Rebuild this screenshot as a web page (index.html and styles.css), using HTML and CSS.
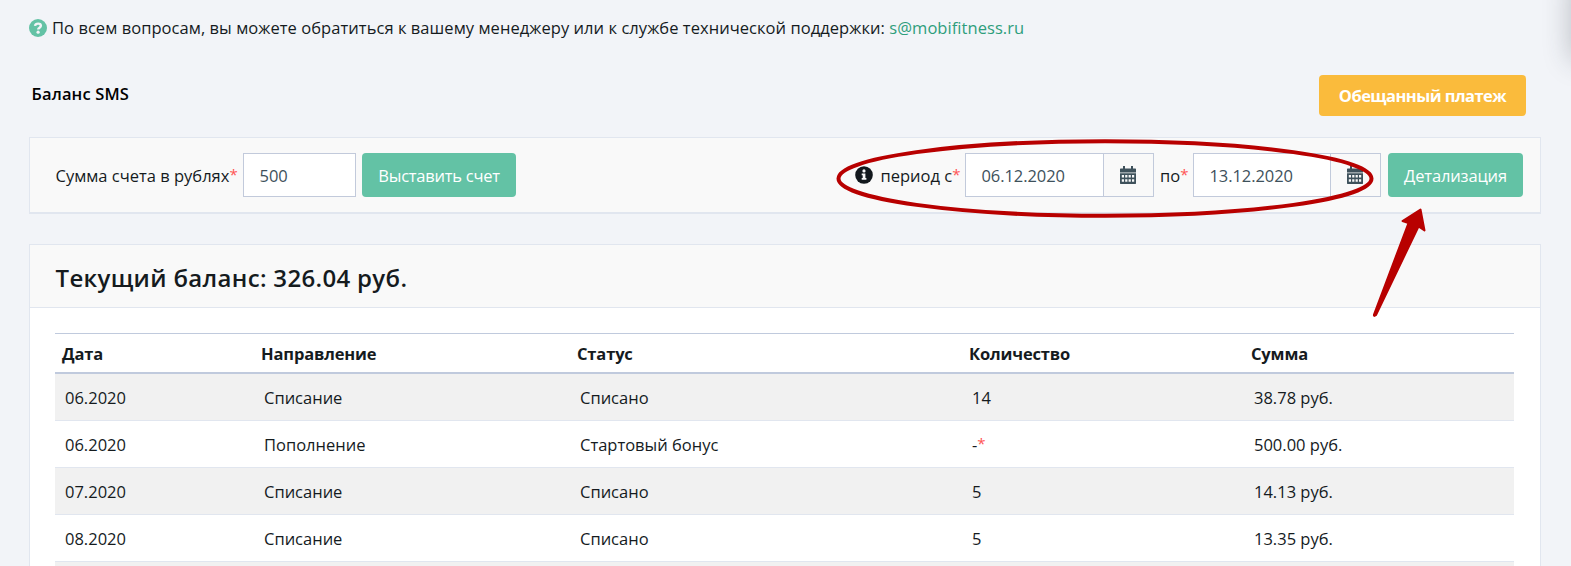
FILE: index.html
```html
<!DOCTYPE html>
<html lang="ru">
<head>
<meta charset="utf-8">
<title>Баланс SMS</title>
<link rel="stylesheet" href="styles.css">
</head>
<body>
<svg class="sprite" aria-hidden="true">
  <symbol id="calendar" viewBox="0 0 16 18">
    <path fill="currentColor" fill-rule="evenodd" d="M3 0h2v2.500h6V0h2v2.500h2.500l.5.5v3.500H0V3l.5-.5H3zM0 7.200h16V17.500l-.5.500H.5L0 17.500zM1.800 9v2.500h2.200V9zm3.400 0v2.500h2.200V9zm3.400 0v2.500h2.200V9zm3.400 0v2.500h2.200V9zM1.800 13.200v2.500h2.200v-2.500zm3.400 0v2.500h2.200v-2.500zm3.400 0v2.500h2.200v-2.500zm3.400 0v2.500h2.200v-2.500z"/>
  </symbol>
</svg>
<main class="page">
  <p class="help">
    <svg class="help-icon" viewBox="0 0 18 18"><circle cx="9" cy="9" r="9" fill="#63c2a5"/><path d="M6 6.900C6.300 5.300 7.500 4.600 9.100 4.600c1.700 0 2.800.9 2.800 2.200 0 1.900-2.700 1.800-2.700 3.700" fill="none" stroke="#f2f4f8" stroke-width="2.400"/><circle cx="9.100" cy="13.200" r="1.600" fill="#f2f4f8"/></svg>
    <span class="help-text">По всем вопросам, вы можете обратиться к вашему менеджеру или к службе технической поддержки: <a href="#">s@mobifitness.ru</a></span>
  </p>

  <div class="heading">
    <h1>Баланс SMS</h1>
    <button class="btn btn-warning"><span>Обещанный платеж</span></button>
  </div>

  <form class="card toolbar">
    <label class="lbl-sum">Сумма счета в рублях<sup>*</sup></label>
    <div class="input input-sum">500</div>
    <button type="button" class="btn btn-invoice"><span>Выставить счет</span></button>
    <div class="period">
      <svg class="info-icon" viewBox="0 0 18 18"><circle cx="9" cy="9" r="8.800" fill="#12181d"/><circle cx="9" cy="4.900" r="1.600" fill="#f9f9f9"/><path d="M6.700 7.500h3.700v4.600h1v1.700H6.700v-1.700h1V9.200h-1z" fill="#f9f9f9"/></svg>
      <label class="lbl-from">период с<sup>*</sup></label>
      <div class="date"><span class="input">06.12.2020</span><span class="addon"><svg><use href="#calendar"/></svg></span></div>
      <label class="lbl-to">по<sup>*</sup></label>
      <div class="date date-to"><span class="input">13.12.2020</span><span class="addon"><svg><use href="#calendar"/></svg></span></div>
      <button type="button" class="btn btn-detail"><span>Детализация</span></button>
    </div>
  </form>

  <section class="card balance">
    <header><h2>Текущий баланс: 326.04 руб.</h2></header>
    <table>
      <colgroup><col class="c1"><col class="c2"><col class="c3"><col class="c4"><col class="c5"></colgroup>
      <thead><tr><th>Дата</th><th>Направление</th><th>Статус</th><th>Количество</th><th>Сумма</th></tr></thead>
      <tbody>
        <tr><td>06.2020</td><td>Списание</td><td>Списано</td><td>14</td><td>38.78 руб.</td></tr>
        <tr><td>06.2020</td><td>Пополнение</td><td>Стартовый бонус</td><td>-<sup>*</sup></td><td>500.00 руб.</td></tr>
        <tr><td>07.2020</td><td>Списание</td><td>Списано</td><td>5</td><td>14.13 руб.</td></tr>
        <tr><td>08.2020</td><td>Списание</td><td>Списано</td><td>5</td><td>13.35 руб.</td></tr>
      </tbody>
      <tfoot><tr><td colspan="5"></td></tr></tfoot>
    </table>
  </section>
</main>
<div class="side-clip"><div class="side-shadow"></div></div>
<svg class="annotation" viewBox="0 0 1571 566">
  <ellipse cx="1105" cy="178.500" rx="266.500" ry="37.300"/>
  <path d="M1420.500 209.500L1424.500 230.500L1418.500 226.500L1376 315Q1373.500 317 1374 314.500L1408.500 223L1402.500 221Z"/>
</svg>
</body>
</html>
```
FILE: styles.css
```css
* { box-sizing: border-box; }
html { height: 566px; overflow: hidden; }
body {
  margin: 0;
  height: 566px;
  overflow: hidden;
  background: #f2f4f8;
  color: #151b1e;
  font: 16.5px/26px "Open Sans", "Noto Sans", sans-serif;
}
.sprite { display: none; }
.page { display: flex; flex-direction: column; height: 566px; padding: 0 30px 0 29px; overflow: hidden; }
.help { display: flex; flex: none; align-items: center; height: 55px; margin: 0; white-space: nowrap; }
.help-icon { width: 18px; height: 18px; margin-right: 5px; }
.help-text { letter-spacing: .052px; }
.help a { color: #2e9e7c; text-decoration: none; }
.heading { display: flex; flex: none; justify-content: space-between; height: 82px; padding: 20px 15px 0 2.500px; }
h1 { margin: 6px 0 0; font-size: 16.5px; line-height: 26px; font-weight: 600; color: #000; letter-spacing: .15px; }
.btn {
  height: 44px; padding: 1px 0 0; border: 0; border-radius: 4px;
  background: #63c2a5; color: #fff; font: inherit; letter-spacing: -.15px; white-space: nowrap;
}
.btn-invoice { letter-spacing: -.25px; }
.btn-warning { width: 207px; height: 41px; background: #fabb3c; font-weight: 700; letter-spacing: -.55px; }
.card { border: 1px solid #e1e6ef; background: #f9f9f9; }
.toolbar {
  display: flex; flex: none; align-items: center; height: 77px; margin: 0 0 30px;
  padding: 0 17px 0 25.500px; border-bottom-width: 2px; white-space: nowrap;
}
sup { color: #ff5454; font-size: 15px; line-height: 0; vertical-align: 2px; }
.input {
  display: flex; align-items: center; height: 44px; padding: 1px 0 0 15.500px;
  border: 1px solid #c2cadb; background: #fff; color: #3e515b;
}
.lbl-sum { width: 187.500px; padding-top: 1px; }
.input-sum { width: 113px; margin-right: 6px; }
.btn-invoice { width: 154px; }
.period { display: flex; align-items: center; margin-left: auto; }
.info-icon { width: 18px; height: 18px; margin-right: 7.500px; }
.lbl-from { width: 84.500px; padding-top: 1px; }
.date { display: flex; width: 189px; }
.date .input { width: 139px; letter-spacing: -.08px; }
.date-to { width: 188px; }
.date-to .input { width: 138px; }
.addon {
  display: flex; align-items: center; justify-content: center; width: 50px;
  border: 1px solid #c2cadb; border-left: 0; background: #f9f9f9; color: #3e515b;
}
.addon svg { width: 16px; height: 18px; margin-right: 1px; }
.lbl-to { width: 39px; padding: 1px 0 0 6px; }
.btn-detail { width: 135px; margin-left: 7px; }
.balance { flex: 1; min-height: 0; border-bottom: 0; background: #fff; overflow: hidden; }
.balance header { height: 63px; padding: 15px 25.500px 0; border-bottom: 1px solid #e1e6ef; background: #f9f9f9; }
h2 { margin: 0; font-size: 24px; line-height: 36px; font-weight: 600; letter-spacing: .33px; white-space: nowrap; }
table { width: 1459px; margin: 25px 0 0 25px; border-collapse: separate; border-spacing: 0; table-layout: fixed; }
.c1 { width: 199px; }
.c2 { width: 316px; }
.c3 { width: 392px; }
.c4 { width: 282px; }
th { height: 41px; padding: 1px 7px 0; border-top: 1px solid #c0cadd; border-bottom: 2px solid #c0cadd; font-weight: 700; letter-spacing: -.15px; text-align: left; }
td { height: 47px; padding: 1px 10px 0; border-bottom: 1px solid #e1e6ef; }
tbody tr:nth-child(odd), tfoot tr { background: #f1f1f1; }
tfoot td { height: 5px; padding: 0; border: 0; }
.side-clip { position: absolute; top: 0; right: 0; width: 40px; height: 140px; overflow: hidden; pointer-events: none; }
.side-shadow { position: absolute; top: -20px; left: 42px; width: 60px; height: 78px; box-shadow: 0 0 28px 2px rgba(40, 45, 60, .28); }
.annotation { position: absolute; inset: 0; width: 1571px; height: 566px; pointer-events: none; }
.annotation ellipse { fill: none; stroke: #b80000; stroke-width: 4; }
.annotation path { fill: #b80000; stroke: #b80000; stroke-width: 2; stroke-linejoin: round; }
```
